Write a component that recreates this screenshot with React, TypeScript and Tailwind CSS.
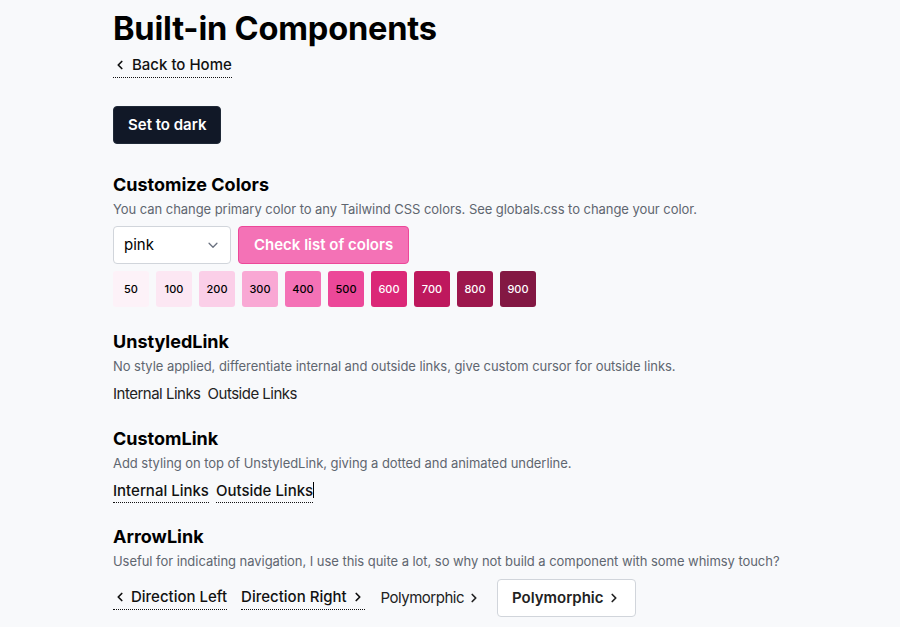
import React from "react";

const swatches = [
  { n: "50", bg: "bg-[#fdf2f8]", t: "text-black" },
  { n: "100", bg: "bg-[#fce7f3]", t: "text-black" },
  { n: "200", bg: "bg-[#fbcfe8]", t: "text-black" },
  { n: "300", bg: "bg-[#f9a8d4]", t: "text-black" },
  { n: "400", bg: "bg-[#f472b6]", t: "text-black" },
  { n: "500", bg: "bg-[#ec4899]", t: "text-black" },
  { n: "600", bg: "bg-[#db2777]", t: "text-white" },
  { n: "700", bg: "bg-[#be185d]", t: "text-white" },
  { n: "800", bg: "bg-[#9d174d]", t: "text-white" },
  { n: "900", bg: "bg-[#831843]", t: "text-white" },
];

function ChevronLeft() {
  return (
    <svg width="14" height="14" viewBox="0 0 16 16" fill="none" className="shrink-0">
      <path d="M10 4L6 8l4 4" stroke="currentColor" strokeWidth="2" strokeLinecap="round" strokeLinejoin="round" />
    </svg>
  );
}
function ChevronRight() {
  return (
    <svg width="14" height="14" viewBox="0 0 16 16" fill="none" className="shrink-0">
      <path d="M6 4l4 4-4 4" stroke="currentColor" strokeWidth="2" strokeLinecap="round" strokeLinejoin="round" />
    </svg>
  );
}

const dotted = "border-b border-dotted border-[#111]";

export default function App() {
  return (
    <div
      className="min-h-[627px] bg-[#f8f9fb] text-black"
      style={{ fontFamily: "Inter, 'Noto Sans', sans-serif" }}
    >
      <div className="px-[113px] pt-[8px]">
        <h1 className="text-[32.6px] leading-[40px] font-bold tracking-[-0.2px]">Built-in Components</h1>
        <div className="mt-[7px] flex">
          <a className={`flex items-center gap-[5px] pb-[2px] text-[15px] leading-[20px] font-medium text-[#111] ${dotted}`}>
            <ChevronLeft />
            <span>Back to Home</span>
          </a>
        </div>

        <div className="mt-[28px] flex">
          <button className="h-[38px] rounded-[4px] border border-[#1f2937] bg-[#111827] px-[14px] text-[15px] font-semibold text-white">
            Set to dark
          </button>
        </div>

        <section className="mt-[29px]">
          <h2 className="text-[18px] leading-[24px] font-bold">Customize Colors</h2>
          <p className="mt-[2px] text-[13px] leading-[20px] tracking-[-0.05px] text-[#5f6670]">
            You can change primary color to any Tailwind CSS colors. See globals.css to change your color.
          </p>
          <div className="mt-[7px] flex gap-[7px]">
            <div className="flex h-[38px] w-[118px] items-center justify-between rounded-[4px] border border-[#d1d5db] bg-white pl-[10px] pr-[10px] text-[15px]">
              <span>pink</span>
              <svg width="14" height="14" viewBox="0 0 16 16" fill="none">
                <path d="M3.5 6l4.5 4.5L12.5 6" stroke="#6b7280" strokeWidth="1.5" strokeLinecap="round" strokeLinejoin="round" />
              </svg>
            </div>
            <button className="h-[38px] rounded-[4px] border border-[#ec4899] bg-[#f472b6] px-[15px] text-[15px] font-semibold text-white">
              Check list of colors
            </button>
          </div>
          <div className="mt-[7px] flex gap-[7px]">
            {swatches.map((s) => (
              <div
                key={s.n}
                className={`flex h-[36px] w-[36px] items-center justify-center rounded-[3px] text-[11px] font-medium ${s.bg} ${s.t}`}
              >
                {s.n}
              </div>
            ))}
          </div>
        </section>

        <section className="mt-[23px]">
          <h2 className="text-[18px] leading-[24px] font-bold">UnstyledLink</h2>
          <p className="mt-[2px] text-[13px] leading-[20px] tracking-[-0.05px] text-[#5f6670]">
            No style applied, differentiate internal and outside links, give custom cursor for outside links.
          </p>
          <div className="mt-[7px] flex gap-[7px] text-[15px] leading-[22px] tracking-[-0.5px] text-[#222]">
            <a>Internal Links</a>
            <a>Outside Links</a>
          </div>
        </section>

        <section className="mt-[22px]">
          <h2 className="text-[18px] leading-[24px] font-bold">CustomLink</h2>
          <p className="mt-[2px] text-[13px] leading-[20px] tracking-[-0.05px] text-[#5f6670]">
            Add styling on top of UnstyledLink, giving a dotted and animated underline.
          </p>
          <div className="mt-[8px] flex gap-[7px] text-[15px] leading-[20px] font-medium text-[#111]">
            <a className={`pb-[1px] ${dotted}`}>Internal Links</a>
            <a className={`relative pb-[1px] ${dotted}`}>
              Outside Links
              <span className="absolute right-[-1px] top-[1px] h-[16px] w-[1px] bg-black" />
            </a>
          </div>
        </section>

        <section className="mt-[22px]">
          <h2 className="text-[18px] leading-[24px] font-bold">ArrowLink</h2>
          <p className="mt-[2px] text-[13px] leading-[20px] tracking-[-0.05px] text-[#5f6670]">
            Useful for indicating navigation, I use this quite a lot, so why not build a component with some whimsy touch?
          </p>
          <div className="mt-[8px] flex items-center gap-[14px] text-[15px]">
            <a className={`flex items-center gap-[4px] pb-[1px] font-medium text-[#111] ${dotted}`}>
              <ChevronLeft />
              <span>Direction Left</span>
            </a>
            <a className={`flex items-center gap-[4px] pb-[1px] font-medium text-[#111] ${dotted}`}>
              <span>Direction Right</span>
              <ChevronRight />
            </a>
            <a className="ml-[2px] flex items-center gap-[3px] text-[#222]">
              <span className="tracking-[-0.5px]">Polymorphic</span>
              <ChevronRight />
            </a>
            <button className="ml-[2px] flex h-[38px] items-center gap-[3px] rounded-[4px] border border-[#d1d5db] bg-white px-[14px] text-[15px] font-semibold text-[#222]">
              <span>Polymorphic</span>
              <ChevronRight />
            </button>
          </div>
        </section>
      </div>
    </div>
  );
}
